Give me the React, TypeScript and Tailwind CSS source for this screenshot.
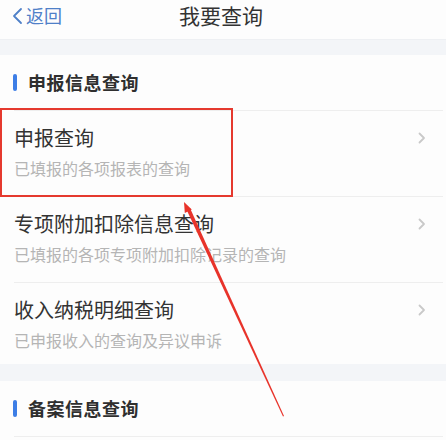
import React from "react";

const font = { fontFamily: '"Noto Sans CJK SC", "Noto Sans", sans-serif' };

function Chevron() {
  return (
    <svg width="8" height="12" viewBox="0 0 8 12" className="shrink-0">
      <path d="M1.5 1.5 L6 6 L1.5 10.5" fill="none" stroke="#c9c9c9" strokeWidth="1.8" strokeLinecap="round" strokeLinejoin="round" />
    </svg>
  );
}

function Item({ title, sub, last }: { title: string; sub: string; last?: boolean }) {
  return (
    <div className={`ml-[14px] mr-[3px] border-t border-[#eeeeee] pt-[13px] ${last ? "pb-[13px]" : "pb-[17px]"} flex justify-between`}>
      <div className="flex flex-col">
        <div className="text-[20px] leading-[28px] text-[#333333]">{title}</div>
        <div className="mt-[5px] text-[16px] leading-[22px] text-[#b5b5b5]">{sub}</div>
      </div>
      <div className="pr-[17px] pt-[8px]">
        <Chevron />
      </div>
    </div>
  );
}

function SectionHeader({ text }: { text: string }) {
  return (
    <div className="h-[55px] flex items-center pl-[13px] gap-[11px]">
      <div className="w-[4px] h-[17px] rounded-full bg-[#3d7ee6]" />
      <div className="text-[18px] font-bold text-[#2f2f2f] tracking-[0.5px]">{text}</div>
    </div>
  );
}

export default function App() {
  return (
    <div className="relative w-[446px] h-[440px] overflow-hidden bg-[#fdfdfd]" style={font}>
      <div className="h-[40px] grid grid-cols-[1fr_auto_1fr] items-start pt-[5px] border-b border-[#eef0f3] bg-[#fdfdfd]">
        <div className="flex items-center pl-[11px] text-[#4f80c8] text-[18px] leading-[21px]">
          <svg width="12" height="18" viewBox="0 0 12 18" className="mr-[3px]">
            <path d="M10 2 L3 9 L10 16" fill="none" stroke="#4f80c8" strokeWidth="1.8" strokeLinecap="round" strokeLinejoin="round" />
          </svg>
          <span>返回</span>
        </div>
        <div className="text-[21px] text-[#333333] leading-[21px] pr-[4px]">我要查询</div>
        <div />
      </div>
      <div className="h-[15px] bg-[#f3f5f8]" />
      <div className="bg-[#fdfdfd]">
        <SectionHeader text="申报信息查询" />
        <Item title="申报查询" sub="已填报的各项报表的查询" />
        <Item title="专项附加扣除信息查询" sub="已填报的各项专项附加扣除记录的查询" />
        <Item title="收入纳税明细查询" sub="已申报收入的查询及异议申诉" last />
      </div>
      <div className="h-[17px] bg-[#f3f5f8]" />
      <div className="bg-[#fdfdfd]">
        <SectionHeader text="备案信息查询" />
        <div className="ml-[14px] mr-[3px] border-t border-[#eeeeee] h-[5px]" />
      </div>

      <div className="absolute left-0 top-[108px] w-[233px] h-[89px] border-2 border-[#e5392e]" />
      <svg className="absolute inset-0 pointer-events-none" width="446" height="440" viewBox="0 0 446 440">
        <polygon points="186.8,210.2 190.2,208.6 284,416 283,416.4" fill="#e8332a" />
        <polygon points="184,202 184.8,213 191.8,209.6" fill="#e8332a" />
      </svg>
    </div>
  );
}
